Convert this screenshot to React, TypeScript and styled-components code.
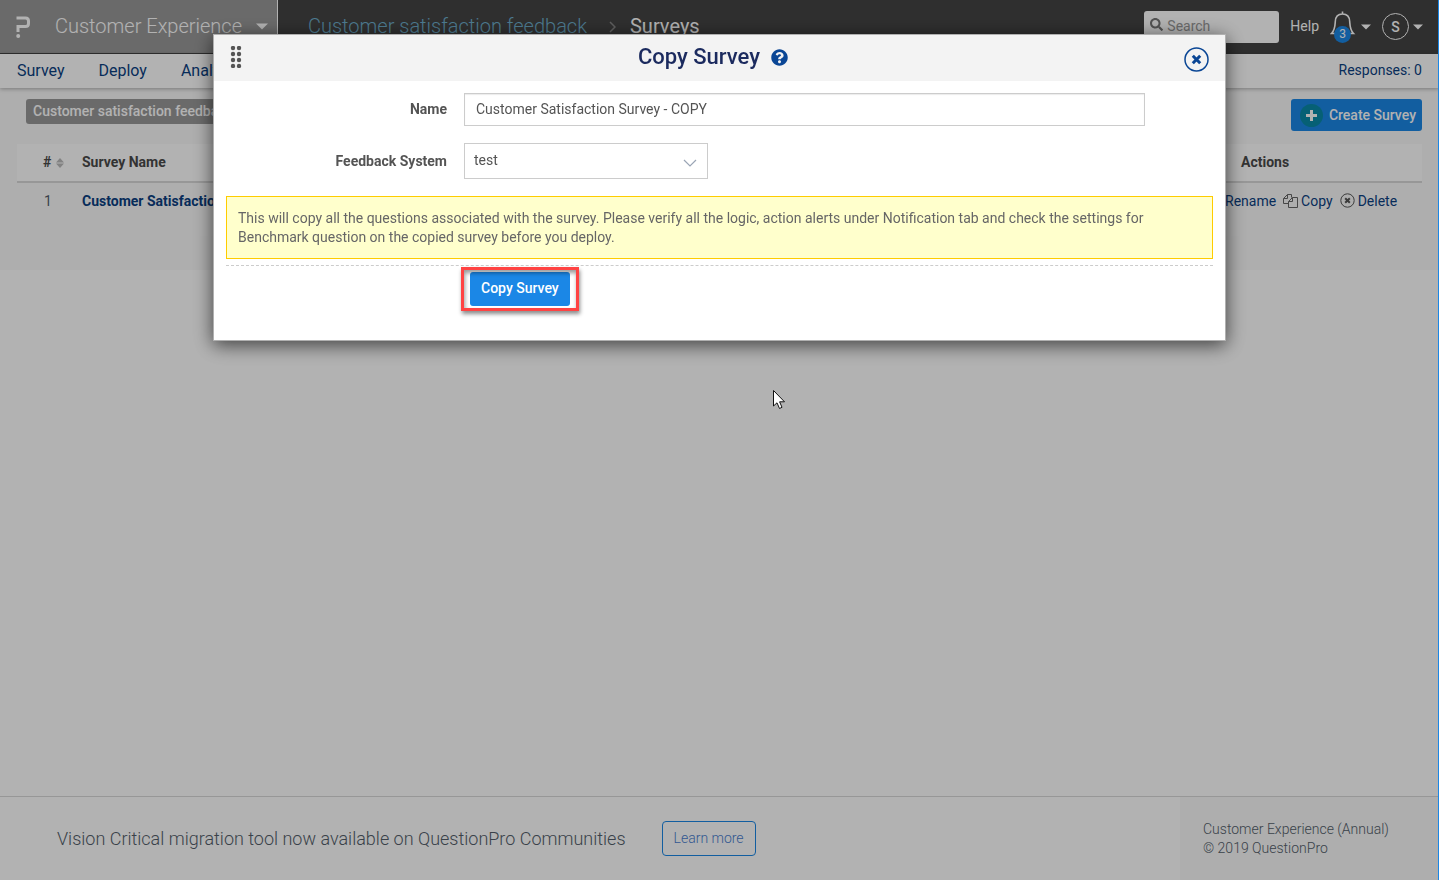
import React from "react";
import styled, { createGlobalStyle } from "styled-components";
import { FaSearch, FaQuestionCircle } from "react-icons/fa";

const GlobalStyle = createGlobalStyle`
  *, *::before, *::after { box-sizing: border-box; }
  body {
    margin: 0;
    background: #fff;
    color: #545e6b;
    font-family: Roboto, "Open Sans", "Liberation Sans", sans-serif;
    font-size: 14px;
    line-height: 19px;
  }
  button, input, select { font: inherit; }
  button { cursor: pointer; }
  a { color: inherit; text-decoration: none; }
  svg { display: block; flex: none; }
`;

const Page = styled.div`
  min-height: 100vh;
  display: flex;
  flex-direction: column;
`;

const TopBar = styled.header`
  display: flex;
  height: 54px;
  background: #444;
  color: #fff;
  font-size: 20px;
  font-weight: 300;
  line-height: 50px;
`;

const ProductSwitch = styled.button`
  display: flex;
  align-items: center;
  width: 278px;
  height: 53px;
  padding: 0 9px 0 14px;
  border: 0;
  border-right: 1px solid #fff;
  background: #999;
  color: #fff;
  text-align: left;
  white-space: nowrap;
`;

const ProductName = styled.span`
  flex: 1;
  padding: 0 0 2px 21px;
`;

const Crumbs = styled.nav`
  display: flex;
  align-items: center;
  flex: 1;
  gap: 14px;
  height: 52px;
  padding-left: 30px;
  white-space: nowrap;

  svg { margin: 2px 0 0 8px; }
`;

const CrumbLink = styled.a`
  color: #6fb1d0;
`;

const CrumbCurrent = styled.span`
  font-weight: 400;
`;

const TopTools = styled.div`
  display: flex;
  align-items: center;
  height: 53px;
  padding-right: 16px;
  font-size: 14px;
  font-weight: 400;
  line-height: 19px;
`;

const SearchBox = styled.label`
  display: flex;
  align-items: center;
  gap: 4px;
  width: 135px;
  height: 32px;
  padding: 0 6px;
  border-radius: 3px;
  background: #fff;
  color: #777;

  svg { margin-bottom: 4px; }
`;

const SearchInput = styled.input`
  width: 100%;
  min-width: 0;
  padding: 0;
  border: 0;
  outline: 0;
  background: transparent;

  &::placeholder { color: #999; opacity: 1; }
`;

const HelpLink = styled.a`
  margin-left: 11px;
`;

const IconButton = styled.button`
  display: flex;
  align-items: center;
  gap: 4px;
  margin-left: 11px;
  padding: 0;
  border: 0;
  background: none;
  color: #fff;
`;

const Bell = styled.span`
  position: relative;
  width: 27px;
  height: 32px;
`;

const Count = styled.span`
  position: absolute;
  left: 4px;
  bottom: 0;
  width: 17px;
  height: 17px;
  border-radius: 50%;
  background: #1b87e6;
  font-size: 12px;
  line-height: 17px;
  text-align: center;
`;

const Avatar = styled.span`
  width: 27px;
  height: 27px;
  border: 1px solid #fff;
  border-radius: 50%;
  font-weight: 500;
  line-height: 26px;
  text-align: center;
`;

const MainNav = styled.nav`
  position: relative;
  display: flex;
  align-items: center;
  gap: 34px;
  height: 34px;
  padding: 0 17px 2px;
  background: #fff;
  box-shadow: 0 1px 4px rgba(0, 0, 0, 0.3);
  color: #0b3f82;
  font-size: 16px;
`;

const ResponseCount = styled.span`
  margin-left: auto;
  font-size: 14px;
`;

const Content = styled.main`
  padding: 11px 17px 34px;
  background: #f9f9f9;
`;

const ContentHead = styled.div`
  display: flex;
  justify-content: space-between;
  align-items: flex-start;
  padding-left: 9px;
  margin-bottom: 13px;
`;

const Tag = styled.span`
  padding: 3px 7px;
  border-radius: 3px;
  background: #999;
  color: #fff;
  font-weight: 500;
`;

const CreateButton = styled.button`
  display: flex;
  align-items: center;
  gap: 6px;
  height: 32px;
  padding: 0 6px 0 9px;
  border: 0;
  border-radius: 3px;
  background: #1b87e6;
  color: #fff;
  font-weight: 500;
  white-space: nowrap;
`;

const SurveyTable = styled.table`
  width: 100%;
  border-collapse: separate;
  border-spacing: 0;
  text-align: left;
`;

const HeadCell = styled.th<{ $width?: string; $indent: number }>`
  width: ${(p) => p.$width ?? "auto"};
  height: 39px;
  padding: 0 0 0 ${(p) => p.$indent}px;
  border-bottom: 2px solid #d9d9d9;
  background: #fff;
  color: #4a4a4a;
  font-weight: 700;
`;

const SortHead = styled.span`
  display: flex;
  align-items: center;
  gap: 5px;
`;

const Cell = styled.td<{ $indent?: number }>`
  height: 53px;
  padding: 9px 0 0 ${(p) => p.$indent ?? 0}px;
  background: #fafafa;
  vertical-align: top;
`;

const SurveyLink = styled.a`
  color: #0b3f82;
  font-weight: 700;
`;

const RowActions = styled.div`
  display: flex;
  gap: 7px;
  color: #0b3f82;
`;

const RowAction = styled.a`
  display: flex;
  gap: 3px;
`;

const Footer = styled.footer`
  display: flex;
  height: 84px;
  margin-top: auto;
  border-top: 1px solid #d9d9d9;
`;

const Announcement = styled.div`
  display: flex;
  align-items: center;
  flex: 1;
  gap: 36px;
  padding-left: 57px;
  font-size: 18px;
  font-weight: 300;
  white-space: nowrap;
`;

const LearnMore = styled.a`
  padding: 7px 11px;
  border: 1px solid #1b87e6;
  border-radius: 4px;
  color: #4a80d0;
  font-size: 14px;
`;

const License = styled.div`
  width: 259px;
  padding: 23px;
  background: #f9f9f9;
  font-weight: 300;
`;

const Overlay = styled.div`
  position: fixed;
  inset: 0;
  padding: 34px 16px 0;
  background: rgba(0, 0, 0, 0.3);
`;

const Dialog = styled.section`
  max-width: 1013px;
  margin: 0 auto;
  border: 1px solid #b0b0b0;
  background: #fff;
  box-shadow: 0 4px 18px rgba(0, 0, 0, 0.65);
`;

const DialogHead = styled.header`
  display: flex;
  align-items: center;
  justify-content: space-between;
  height: 46px;
  padding: 0 16px 2px;
  background: #f3f3f3;
`;

const DialogTitle = styled.h2`
  display: flex;
  align-items: center;
  gap: 11px;
  margin: 0;
  color: #1b2a5e;
  font-size: 22px;
  font-weight: 500;
  line-height: 28px;

  svg { color: #0a4695; }
`;

const CloseButton = styled.button`
  padding: 4px 0 0;
  border: 0;
  background: none;
`;

const DialogBody = styled.form`
  padding: 12px 12px 29px;
`;

const Field = styled.div`
  display: grid;
  grid-template-columns: 221px 1fr;
  column-gap: 17px;
  align-items: center;
  margin-bottom: 17px;
`;

const FieldLabel = styled.label`
  color: #545454;
  font-weight: 700;
  text-align: right;
`;

const TextInput = styled.input`
  width: 100%;
  max-width: 681px;
  height: 33px;
  padding: 0 11px 2px;
  border: 1px solid #ccc;
  border-radius: 0;
  outline: 0;
  box-shadow: inset 0 1px 1px rgba(0, 0, 0, 0.08);
  color: #545454;
`;

const SelectWrap = styled.div`
  position: relative;
  width: 244px;

  svg {
    position: absolute;
    right: 11px;
    top: 16px;
    pointer-events: none;
  }
`;

const Select = styled.select`
  width: 100%;
  height: 36px;
  padding: 0 9px 2px;
  border: 1px solid #ccc;
  border-radius: 0;
  outline: 0;
  appearance: none;
  background: #fff;
  color: #545454;
`;

const Notice = styled.p`
  margin: 0 0 6px;
  padding: 12px 11px 11px;
  border: 1px solid #fc0;
  background: #ffc;
  color: #666;
`;

const DialogActions = styled.div`
  padding: 1px 0 0 235px;
  border-top: 1px dashed #ccc;
`;

const Highlight = styled.div`
  position: relative;
  width: max-content;
  padding: 5px 9px;

  &::after {
    content: "";
    position: absolute;
    inset: 0;
    border: 3px solid #ff4343;
    box-shadow: 1px 3px 4px rgba(0, 0, 0, 0.45), inset 1px 3px 4px rgba(0, 0, 0, 0.4);
    pointer-events: none;
  }
`;

const SubmitButton = styled.button`
  display: block;
  height: 34px;
  padding: 0 11px 2px;
  border: 0;
  border-radius: 3px;
  background: #1b87e6;
  color: #fff;
  font-weight: 500;
`;

const WindowEdge = styled.div`
  position: fixed;
  top: 0;
  right: 0;
  bottom: 0;
  width: 1px;
  background: #1b87e6;
`;

const Pointer = styled.svg`
  position: fixed;
  left: 773px;
  top: 390px;
`;

const Logo = () => (
  <svg width="20" height="24" viewBox="0 0 20 24" fill="none" stroke="#fff" strokeWidth="3">
    <path d="M2.500 3H11.500Q14.500 3 14.500 6V8.500Q14.500 11.500 11.500 11.500H4V17" />
    <circle cx="4.200" cy="21" r="2" fill="#fff" stroke="none" />
  </svg>
);

const Caret = () => (
  <svg width="12" height="7" viewBox="0 0 12 7">
    <path d="M0 0.500H12L6 6.500Z" fill="#fff" />
  </svg>
);

const SmallCaret = () => (
  <svg width="10" height="6" viewBox="0 0 10 6">
    <path d="M0 0.500H10L5 5.500Z" fill="#fff" />
  </svg>
);

const CopyIcon = () => (
  <svg width="15" height="17" viewBox="0 0 15 17" fill="none" stroke="#666" strokeLinejoin="round">
    <path d="M5.500 11.500H0.500V6.500L4.500 2.500H8.500V5.500" />
    <path d="M4.500 2.500V6.500H0.500" />
    <path d="M5.500 9.500L9.500 5.500H14.500V15.500H5.500Z" />
    <path d="M9.500 5.500V9.500H5.500" />
  </svg>
);

const DeleteIcon = () => (
  <svg width="15" height="17" viewBox="0 0 15 17" fill="none" stroke="#555">
    <circle cx="7.500" cy="8.500" r="6.700" />
    <path d="M5.200 6.200L9.800 10.800M9.800 6.200L5.200 10.800" strokeWidth="2" />
  </svg>
);

const DragHandle = () => (
  <svg width="12" height="22" viewBox="0 0 12 22" fill="#555">
    {[2, 8, 14, 20].map((y) => (
      <React.Fragment key={y}>
        <circle cx="3" cy={y} r="2.200" />
        <circle cx="9" cy={y} r="2.200" />
      </React.Fragment>
    ))}
  </svg>
);

export default function App() {
  return (
    <>
      <GlobalStyle />
      <Page>
        <TopBar>
          <ProductSwitch type="button">
            <Logo />
            <ProductName>Customer Experience</ProductName>
            <Caret />
          </ProductSwitch>
          <Crumbs aria-label="Breadcrumb">
            <CrumbLink href="#">Customer satisfaction feedback</CrumbLink>
            <svg width="7" height="12" viewBox="0 0 7 12" fill="none" stroke="#888" strokeWidth="1.500">
              <path d="M1 1L6 6L1 11" />
            </svg>
            <CrumbCurrent>Surveys</CrumbCurrent>
          </Crumbs>
          <TopTools>
            <SearchBox>
              <FaSearch size={13} />
              <SearchInput type="search" placeholder="Search" aria-label="Search" />
            </SearchBox>
            <HelpLink href="#">Help</HelpLink>
            <IconButton type="button" aria-label="Notifications">
              <Bell>
                <svg width="26" height="26" viewBox="0 0 26 26" fill="none" stroke="#fff" strokeWidth="1.600">
                  <path d="M12.500 0.500V3M1.500 22.500C5 19 5 15.500 5.300 10.500C5.500 5.500 8.500 3 12.500 3S19.500 5.500 19.700 10.500C20 15.500 20 19 23.500 22.500Z" />
                </svg>
                <Count>3</Count>
              </Bell>
              <SmallCaret />
            </IconButton>
            <IconButton type="button" aria-label="Account">
              <Avatar>S</Avatar>
              <SmallCaret />
            </IconButton>
          </TopTools>
        </TopBar>
        <MainNav>
          <a href="#">Survey</a>
          <a href="#">Deploy</a>
          <a href="#">Analytics</a>
          <ResponseCount>Responses: 0</ResponseCount>
        </MainNav>
        <Content>
          <ContentHead>
            <Tag>Customer satisfaction feedback</Tag>
            <CreateButton type="button">
              <svg width="23" height="23" viewBox="0 0 23 23">
                <circle cx="11.500" cy="11.500" r="11.500" fill="#0a8aa8" />
                <path d="M11.500 6V17M6 11.500H17" stroke="#fff" strokeWidth="3" />
              </svg>
              Create Survey
            </CreateButton>
          </ContentHead>
          <SurveyTable>
            <thead>
              <tr>
                <HeadCell $width="65px" $indent={26}>
                  <SortHead>
                    #
                    <svg width="8" height="10" viewBox="0 0 8 10" fill="#bbb">
                      <path d="M0 4.500L4 0L8 4.500ZM0 5.500L4 10L8 5.500Z" />
                    </svg>
                  </SortHead>
                </HeadCell>
                <HeadCell $indent={0}>Survey Name</HeadCell>
                <HeadCell $width="197px" $indent={16}>Actions</HeadCell>
              </tr>
            </thead>
            <tbody>
              <tr>
                <Cell $indent={27}>1</Cell>
                <Cell>
                  <SurveyLink href="#">Customer Satisfaction Survey</SurveyLink>
                </Cell>
                <Cell>
                  <RowActions>
                    <RowAction href="#">Rename</RowAction>
                    <RowAction href="#"><CopyIcon />Copy</RowAction>
                    <RowAction href="#"><DeleteIcon />Delete</RowAction>
                  </RowActions>
                </Cell>
              </tr>
            </tbody>
          </SurveyTable>
        </Content>
        <Footer>
          <Announcement>
            Vision Critical migration tool now available on QuestionPro Communities
            <LearnMore href="#">Learn more</LearnMore>
          </Announcement>
          <License>
            Customer Experience (Annual)
            <br />
            © 2019 QuestionPro
          </License>
        </Footer>
      </Page>

      <Overlay>
        <Dialog role="dialog" aria-modal="true" aria-labelledby="copy-title">
          <DialogHead>
            <DragHandle />
            <DialogTitle id="copy-title">
              Copy Survey
              <FaQuestionCircle size={17} />
            </DialogTitle>
            <CloseButton type="button" aria-label="Close">
              <svg width="25" height="25" viewBox="0 0 25 25" fill="none" stroke="#0a4695">
                <circle cx="12.500" cy="12.500" r="11.500" strokeWidth="1.500" />
                <path d="M8.800 8.800L16.200 16.200M16.200 8.800L8.800 16.200" strokeWidth="3" />
              </svg>
            </CloseButton>
          </DialogHead>
          <DialogBody onSubmit={(e) => e.preventDefault()}>
            <Field>
              <FieldLabel htmlFor="survey-name">Name</FieldLabel>
              <TextInput id="survey-name" type="text" defaultValue="Customer Satisfaction Survey - COPY" />
            </Field>
            <Field>
              <FieldLabel htmlFor="feedback-system">Feedback System</FieldLabel>
              <SelectWrap>
                <Select id="feedback-system" defaultValue="test">
                  <option value="test">test</option>
                </Select>
                <svg width="14" height="8" viewBox="0 0 14 8" fill="none" stroke="#9aa5b5" strokeWidth="1.200">
                  <path d="M1 1L7 7L13 1" />
                </svg>
              </SelectWrap>
            </Field>
            <Notice>
              This will copy all the questions associated with the survey. Please verify all the logic, action alerts under
              Notification tab and check the settings for Benchmark question on the copied survey before you deploy.
            </Notice>
            <DialogActions>
              <Highlight>
                <SubmitButton type="submit">Copy Survey</SubmitButton>
              </Highlight>
            </DialogActions>
          </DialogBody>
        </Dialog>
      </Overlay>
      <WindowEdge />
      <Pointer width="13" height="20" viewBox="0 0 13 20" aria-hidden="true">
        <path d="M0.500 0.500V16L4 12.800L6.500 18.500L9 17.300L6.600 11.800H11.500Z" fill="#fff" stroke="#111" />
      </Pointer>
    </>
  );
}
